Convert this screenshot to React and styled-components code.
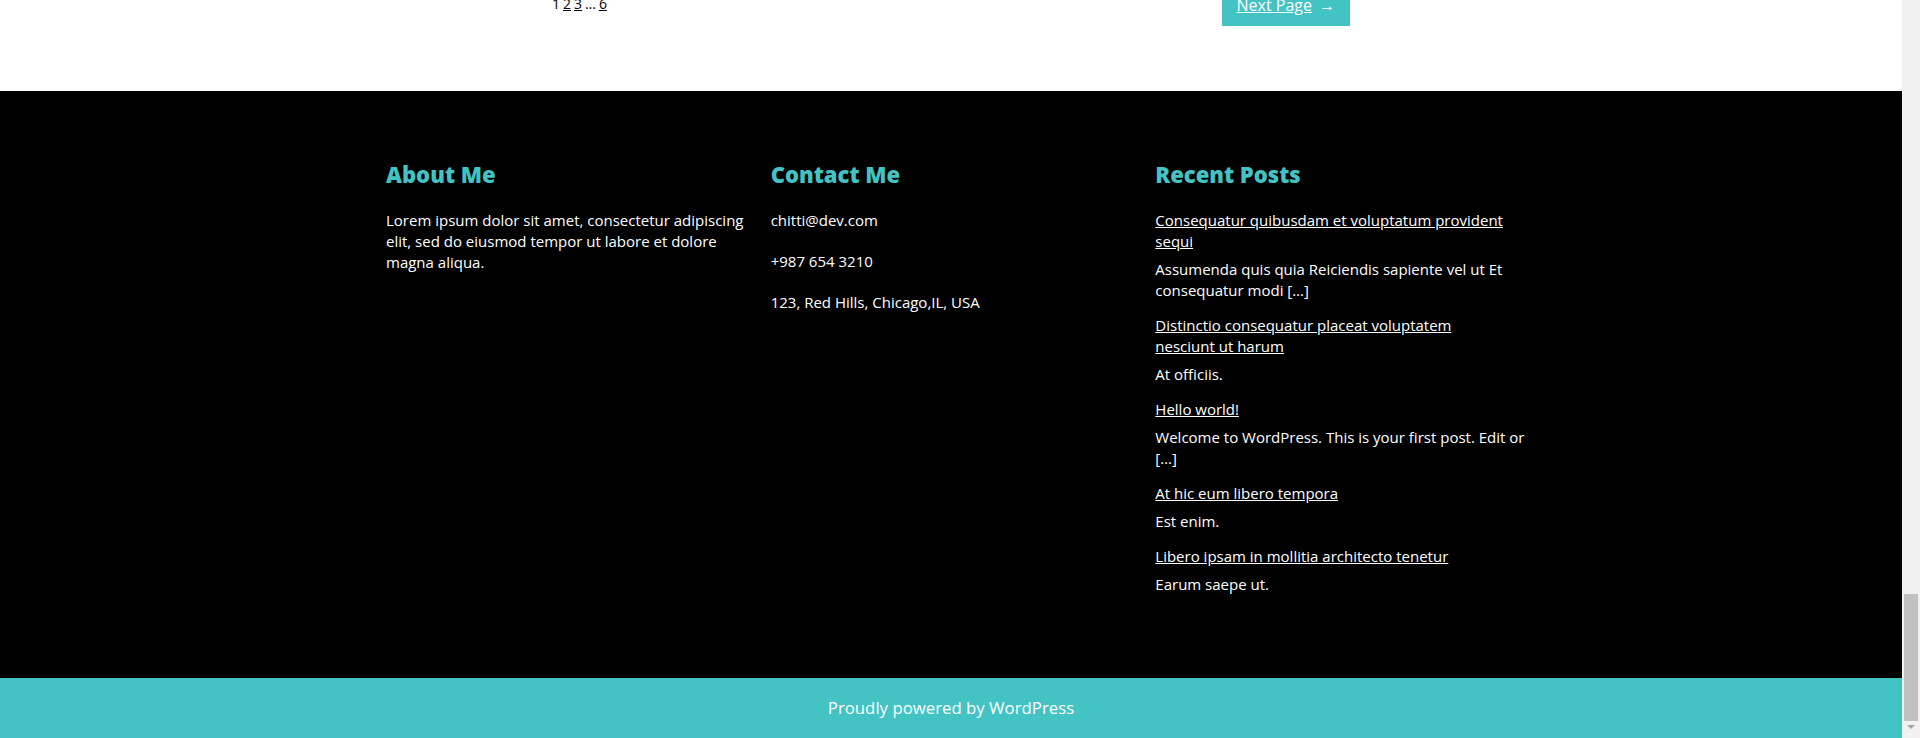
import { useLayoutEffect } from "react";
import styled, { createGlobalStyle } from "styled-components";

const TEAL = "#43c3c3";

const GlobalStyle = createGlobalStyle`
  body {
    margin: 0 18px 0 0;
    background: #fff;
    color: #000;
    font-family: "Open Sans", "Liberation Sans", sans-serif;
    font-size: 15px;
    line-height: 21px;
  }
  * {
    box-sizing: border-box;
  }
`;

// the browser's scrollbar, scrolled to the end of a long page
const ScrollBar = styled.div`
  position: fixed;
  top: 0;
  right: 0;
  bottom: 0;
  width: 18px;
  background: #f1f1f1;
  display: flex;
  flex-direction: column;
  padding-top: 17px;
`;

const ScrollTrack = styled.div`
  flex: 1;
  display: flex;
  flex-direction: column;
  justify-content: flex-end;
  padding: 0 2px;
`;

const ScrollThumb = styled.div`
  height: 127px;
  background: #c1c1c1;
`;

const ScrollArrow = styled.div`
  height: 17px;
  display: flex;
  justify-content: center;
  padding-top: 4px;
  &::before {
    content: "";
    border-left: 4px solid transparent;
    border-right: 4px solid transparent;
    border-top: 4px solid #a3a3a3;
    height: 0;
  }
`;

// posts area above the footer; only its pagination row is in view
const Main = styled.main`
  min-height: 3413px;
  display: flex;
  flex-direction: column;
  justify-content: flex-end;
  padding-bottom: 65px;
`;

const Pager = styled.nav`
  width: 798px;
  margin: 0 auto;
  display: flex;
  justify-content: space-between;
  align-items: flex-start;
`;

const Pages = styled.div`
  display: flex;
  gap: 3px;
  margin-top: 15px;
  font-size: 14px;
  line-height: 19px;
  a {
    color: #000;
  }
`;

const NextBtn = styled.a`
  display: inline-flex;
  align-items: center;
  gap: 7px;
  padding: 14px 15px 9px 15px;
  background: ${TEAL};
  color: #fff;
  font-size: 16px;
  line-height: 24px;
  text-decoration: none;
  span:first-child {
    text-decoration: underline;
  }
`;

const Footer = styled.footer`
  background: #000;
  color: #fff;
  padding: 70px 0 83px;
`;

const Columns = styled.div`
  max-width: 1154px;
  margin: 0 auto;
  padding-left: 12px;
  display: grid;
  grid-template-columns: repeat(3, 1fr);
  column-gap: 12px;
`;

const Widget = styled.section``;

const WidgetTitle = styled.h2`
  margin: 0 0 23px;
  color: ${TEAL};
  font-size: 22px;
  line-height: 26px;
  font-weight: 800;
`;

const Text = styled.p`
  margin: 0 0 20px;
`;

const PostList = styled.ul`
  list-style: none;
  margin: 0;
  padding: 0;
  display: flex;
  flex-direction: column;
  gap: 14px;
`;

const PostLink = styled.a`
  color: #fff;
  text-decoration: underline;
`;

const Excerpt = styled.div`
  margin-top: 7px;
`;

const BottomBar = styled.div`
  background: ${TEAL};
  color: #fff;
  text-align: center;
  font-size: 16.8px;
  line-height: 24px;
  padding: 18px 0 18px;
`;

const posts = [
  {
    title: "Consequatur quibusdam et voluptatum provident sequi",
    excerpt: "Assumenda quis quia Reiciendis sapiente vel ut Et consequatur modi […]",
  },
  {
    title: (
      <>
        Distinctio consequatur placeat voluptatem
        <br />
        nesciunt ut harum
      </>
    ),
    excerpt: "At officiis.",
  },
  {
    title: "Hello world!",
    excerpt: "Welcome to WordPress. This is your first post. Edit or […]",
  },
  { title: "At hic eum libero tempora", excerpt: "Est enim." },
  { title: "Libero ipsam in mollitia architecto tenetur", excerpt: "Earum saepe ut." },
];

export default function App() {
  useLayoutEffect(() => {
    window.scrollTo(0, document.documentElement.scrollHeight);
  }, []);

  return (
    <>
      <GlobalStyle />
      <Main>
        <Pager>
          <Pages>
            <span>1</span>
            <a href="#">2</a>
            <a href="#">3</a>
            <span>…</span>
            <a href="#">6</a>
          </Pages>
          <NextBtn href="#">
            <span>Next Page</span>
            <span>→</span>
          </NextBtn>
        </Pager>
      </Main>
      <Footer>
        <Columns>
          <Widget>
            <WidgetTitle>About Me</WidgetTitle>
            <Text>
              Lorem ipsum dolor sit amet, consectetur adipiscing elit, sed do
              eiusmod tempor ut labore et dolore magna aliqua.
            </Text>
          </Widget>
          <Widget>
            <WidgetTitle>Contact Me</WidgetTitle>
            <Text>chitti@dev.com</Text>
            <Text>+987 654 3210</Text>
            <Text>123, Red Hills, Chicago,IL, USA</Text>
          </Widget>
          <Widget>
            <WidgetTitle>Recent Posts</WidgetTitle>
            <PostList>
              {posts.map((p, i) => (
                <li key={i}>
                  <PostLink href="#">{p.title}</PostLink>
                  <Excerpt>{p.excerpt}</Excerpt>
                </li>
              ))}
            </PostList>
          </Widget>
        </Columns>
      </Footer>
      <BottomBar>Proudly powered by WordPress</BottomBar>
      <ScrollBar>
        <ScrollTrack>
          <ScrollThumb />
        </ScrollTrack>
        <ScrollArrow />
      </ScrollBar>
    </>
  );
}
